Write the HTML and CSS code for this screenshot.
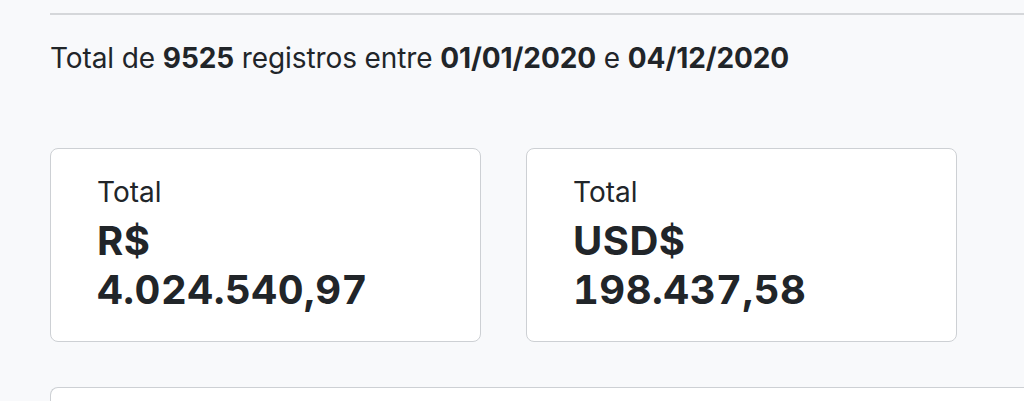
FILE: index.html
```html
<!DOCTYPE html>
<html lang="pt-BR">
<head>
<meta charset="utf-8">
<title>Resumo</title>
<link rel="stylesheet" href="styles.css">
</head>
<body>
<main class="page">
  <div class="rule"></div>
  <p class="summary">Total de <b>9525</b> registros entre <b>01/01/2020</b> e <b>04/12/2020</b></p>
  <section class="cards">
    <div class="card">
      <div class="card-label">Total</div>
      <div class="card-value">R$<br>4.024.540,97</div>
    </div>
    <div class="card">
      <div class="card-label">Total</div>
      <div class="card-value">USD$<br>198.437,58</div>
    </div>
  </section>
  <section class="panel"></section>
</main>
</body>
</html>
```

FILE: styles.css
```css
html, body {
  margin: 0;
  padding: 0;
  background: #f8f9fb;
  overflow: hidden;
}
body {
  font-family: "Inter", "Noto Sans", sans-serif;
  color: #212529;
}
.page {
  padding: 13px 0 0 50px;
}
.rule {
  height: 2px;
  background: #d5d7da;
}
.summary {
  margin: 26px 0 0 0;
  font-size: 28px;
  line-height: 34px;
  letter-spacing: -0.1px;
}
.summary b {
  font-weight: 700;
}
.cards {
  display: flex;
  gap: 45px;
  margin-top: 73px;
}
.card {
  box-sizing: border-box;
  width: 431px;
  height: 194px;
  background: #fff;
  border: 1px solid #cdd0d4;
  border-radius: 8px;
  padding: 26px 46px;
}
.card-label {
  font-size: 28px;
  line-height: 34px;
}
.card-value {
  margin-top: 7px;
  font-size: 40px;
  font-weight: 700;
  line-height: 49px;
  letter-spacing: 0.5px;
  font-variant-numeric: tabular-nums;
}
.panel {
  margin-top: 45px;
  height: 60px;
  background: #fff;
  border: 1px solid #cdd0d4;
  border-right: none;
  border-radius: 8px 0 0 0;
}
```
